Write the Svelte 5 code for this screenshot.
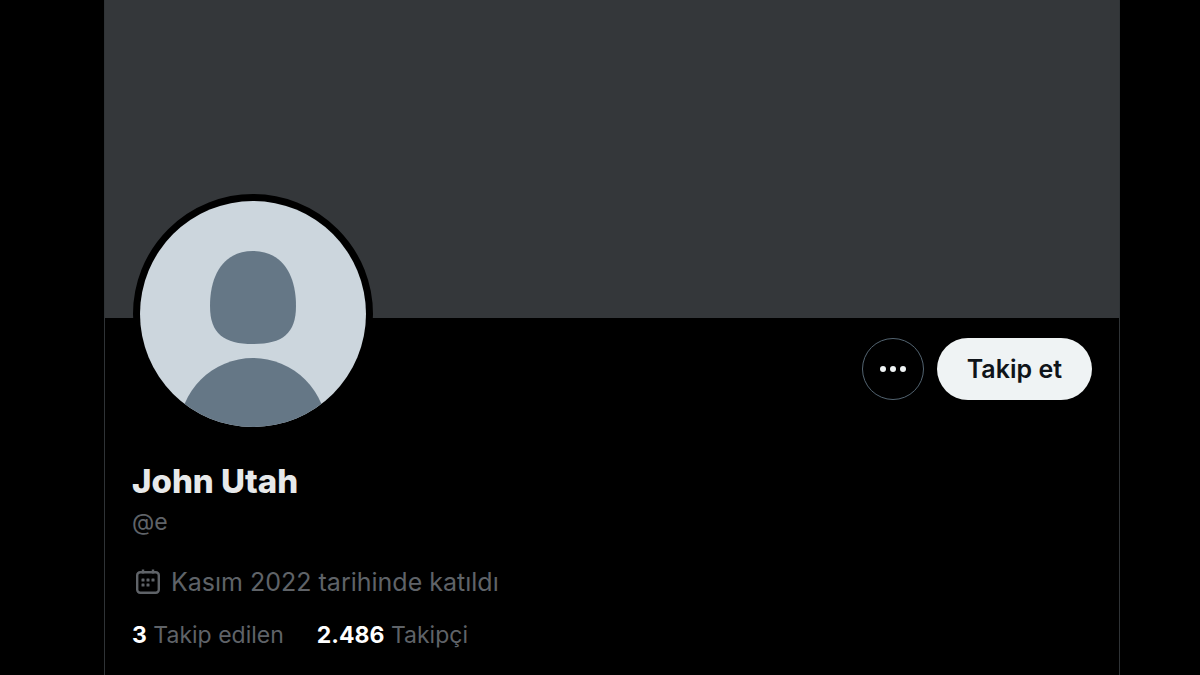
<script>
  const profile = {
    name: 'John Utah',
    handle: '@e',
    joined: 'Kasım 2022 tarihinde katıldı',
    stats: [
      { count: '3', label: 'Takip edilen' },
      { count: '2.486', label: 'Takipçi' }
    ]
  };
  const calendarDots = [[9, 12], [14, 12], [19, 12], [9, 17], [14, 17]];
</script>

<div class="page">
  <main class="profile">
    <div class="banner"></div>
    <div class="top">
      <div class="avatar">
        <svg viewBox="1 1 226 226" role="img" aria-label={profile.name}>
          <rect width="228" height="228" fill="#ccd6dd" />
          <path
            fill="#657786"
            d="M114 51C142 51 157 73 157 106C157 134 143 144 114 144C85 144 71 134 71 106C71 73 86 51 114 51Z"
          />
          <circle cx="114" cy="232" r="74" fill="#657786" />
        </svg>
      </div>
      <div class="actions">
        <button class="more" aria-label="Daha fazla">
          <svg viewBox="0 0 28 28" aria-hidden="true" fill="currentColor">
            <circle cx="4" cy="14" r="3" />
            <circle cx="14" cy="14" r="3" />
            <circle cx="24" cy="14" r="3" />
          </svg>
        </button>
        <button class="follow">Takip et</button>
      </div>
    </div>
    <div class="details">
      <h1>{profile.name}</h1>
      <p class="handle">{profile.handle}</p>
      <p class="joined">
        <svg viewBox="0 0 28 28" aria-hidden="true">
          <rect x="3.2" y="4.2" width="21.6" height="20.6" rx="3" fill="none" stroke="currentColor" stroke-width="2.4" />
          <path d="M9 1.500v4M19 1.500v4" fill="none" stroke="currentColor" stroke-width="2.4" />
          {#each calendarDots as [x, y]}
            <rect x={x - 1.5} y={y - 1.5} width="3" height="3" rx="0.5" fill="currentColor" />
          {/each}
        </svg>
        <span>{profile.joined}</span>
      </p>
      <div class="stats">
        {#each profile.stats as stat}
          <a href="#stats"><strong>{stat.count}</strong> {stat.label}</a>
        {/each}
      </div>
    </div>
  </main>
</div>

<style>
  :global(body) {
    margin: 0;
    background: #000;
  }
  .page {
    box-sizing: border-box;
    min-height: 100vh;
    display: flex;
    padding: 0 80px 0 104px;
    background: #000;
    color: #5f6368;
    font-family: Inter, "Liberation Sans", sans-serif;
    font-size: 25px;
    line-height: 32px;
  }
  .profile {
    flex: 1;
    border: solid #2f3336;
    border-width: 0 1px;
  }
  .banner {
    height: 318px;
    background: #34373a;
  }
  .top {
    display: flex;
    justify-content: space-between;
    align-items: flex-start;
    padding: 0 27px 0 28px;
  }
  .avatar {
    box-sizing: border-box;
    width: 240px;
    height: 240px;
    margin-top: -124px;
    border: 7px solid #000;
    border-radius: 50%;
    background: #000;
  }
  .avatar svg {
    display: block;
    border-radius: 50%;
  }
  .actions {
    display: flex;
    gap: 13px;
    padding-top: 20px;
  }
  button {
    box-sizing: border-box;
    height: 62px;
    border-radius: 31px;
    font: inherit;
    cursor: pointer;
  }
  .more {
    display: grid;
    place-items: center;
    width: 62px;
    padding: 0;
    border: 1px solid #536471;
    background: #000;
    color: #eff3f4;
  }
  .more svg {
    width: 28px;
  }
  .follow {
    padding: 0 30px;
    border: 0;
    background: #eff3f4;
    color: #0f1419;
    font-weight: 600;
  }
  .details {
    padding: 25px 27px;
  }
  h1,
  p {
    margin: 0;
  }
  h1 {
    color: #e7e9ea;
    font-size: 33px;
    font-weight: 800;
    line-height: 44px;
  }
  .handle {
    margin-top: 3px;
    font-size: 23px;
  }
  .joined {
    display: flex;
    align-items: center;
    gap: 9px;
    margin-top: 28px;
    padding-left: 2px;
  }
  .joined svg {
    width: 28px;
  }
  .stats {
    display: flex;
    gap: 33px;
    margin-top: 21px;
    font-size: 23px;
  }
  a {
    color: inherit;
    text-decoration: none;
  }
  strong {
    color: #fff;
    font-weight: 700;
  }
</style>
